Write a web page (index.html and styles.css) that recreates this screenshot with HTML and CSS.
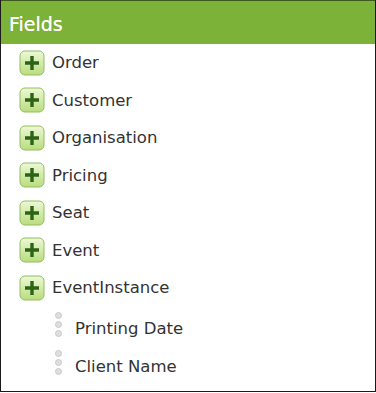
FILE: index.html
```html
<!DOCTYPE html>
<html lang="en">
<head>
	<meta charset="UTF-8">
	<title>Fields</title>
	<link rel="stylesheet" href="styles.css">
</head>
<body>
	<div class="panel">
		<div class="panel-head">Fields</div>
		<ul class="tree">
			<li class="node"><span class="expand"><svg viewBox="0 0 26 26" width="26" height="26"><defs><linearGradient id="g" x1="0" y1="0" x2="0" y2="1"><stop offset="0" stop-color="#eef8d8"/><stop offset="1" stop-color="#b9dc7e"/></linearGradient></defs><rect x="1" y="1" width="24" height="24" rx="5" fill="url(#g)" stroke="#8fc05a"/><path d="M13 6v14M6 13h14" stroke="#2c6314" stroke-width="3.4"/></svg></span>Order</li>
			<li class="node"><span class="expand"><svg viewBox="0 0 26 26" width="26" height="26"><rect x="1" y="1" width="24" height="24" rx="5" fill="url(#g)" stroke="#8fc05a"/><path d="M13 6v14M6 13h14" stroke="#2c6314" stroke-width="3.4"/></svg></span>Customer</li>
			<li class="node"><span class="expand"><svg viewBox="0 0 26 26" width="26" height="26"><rect x="1" y="1" width="24" height="24" rx="5" fill="url(#g)" stroke="#8fc05a"/><path d="M13 6v14M6 13h14" stroke="#2c6314" stroke-width="3.4"/></svg></span>Organisation</li>
			<li class="node"><span class="expand"><svg viewBox="0 0 26 26" width="26" height="26"><rect x="1" y="1" width="24" height="24" rx="5" fill="url(#g)" stroke="#8fc05a"/><path d="M13 6v14M6 13h14" stroke="#2c6314" stroke-width="3.4"/></svg></span>Pricing</li>
			<li class="node"><span class="expand"><svg viewBox="0 0 26 26" width="26" height="26"><rect x="1" y="1" width="24" height="24" rx="5" fill="url(#g)" stroke="#8fc05a"/><path d="M13 6v14M6 13h14" stroke="#2c6314" stroke-width="3.4"/></svg></span>Seat</li>
			<li class="node"><span class="expand"><svg viewBox="0 0 26 26" width="26" height="26"><rect x="1" y="1" width="24" height="24" rx="5" fill="url(#g)" stroke="#8fc05a"/><path d="M13 6v14M6 13h14" stroke="#2c6314" stroke-width="3.4"/></svg></span>Event</li>
			<li class="node"><span class="expand"><svg viewBox="0 0 26 26" width="26" height="26"><rect x="1" y="1" width="24" height="24" rx="5" fill="url(#g)" stroke="#8fc05a"/><path d="M13 6v14M6 13h14" stroke="#2c6314" stroke-width="3.4"/></svg></span>EventInstance</li>
			<li class="leaf"><span class="grip"><i></i><i></i><i></i></span>Printing Date</li>
			<li class="leaf"><span class="grip"><i></i><i></i><i></i></span>Client Name</li>
		</ul>
	</div>
</body>
</html>
```

FILE: styles.css
```css
body, ul {
	margin: 0;
	padding: 0;
}
body {
	font-family: "DejaVu Sans", Verdana, sans-serif;
	background: #fff;
}
.panel {
	width: 374px;
	height: 391px;
	border: 1px solid #1a1a1a;
	border-top: 0;
	overflow: hidden;
}
.panel-head {
	height: 43px;
	margin: 0 -1px;
	padding: 0 0 0 9px;
	background: #7db238;
	border-top: 1px solid #3d5a1c;
	color: #fff;
	font-size: 19px;
	line-height: 46px;
	text-shadow: 0 0 0.4px #fff;
}
.tree {
	list-style: none;
	padding: 0 0 0 18px;
}
.node {
	display: flex;
	align-items: center;
	height: 37.5px;
	font-size: 16.5px;
	color: #333;
}
.expand {
	display: flex;
	width: 26px;
	height: 26px;
	margin-right: 7px;
}
.leaf {
	display: flex;
	align-items: center;
	height: 38px;
	padding-left: 36px;
	font-size: 16.5px;
	color: #333;
}
.node + .leaf {
	margin-top: 3px;
}
.grip {
	display: flex;
	flex-direction: column;
	gap: 2px;
	width: 20px;
	margin-top: -9px;
}
.grip i {
	display: block;
	width: 5px;
	height: 5px;
	border-radius: 50%;
	background: #dedede;
	border: 1px solid #cacaca;
}
```
